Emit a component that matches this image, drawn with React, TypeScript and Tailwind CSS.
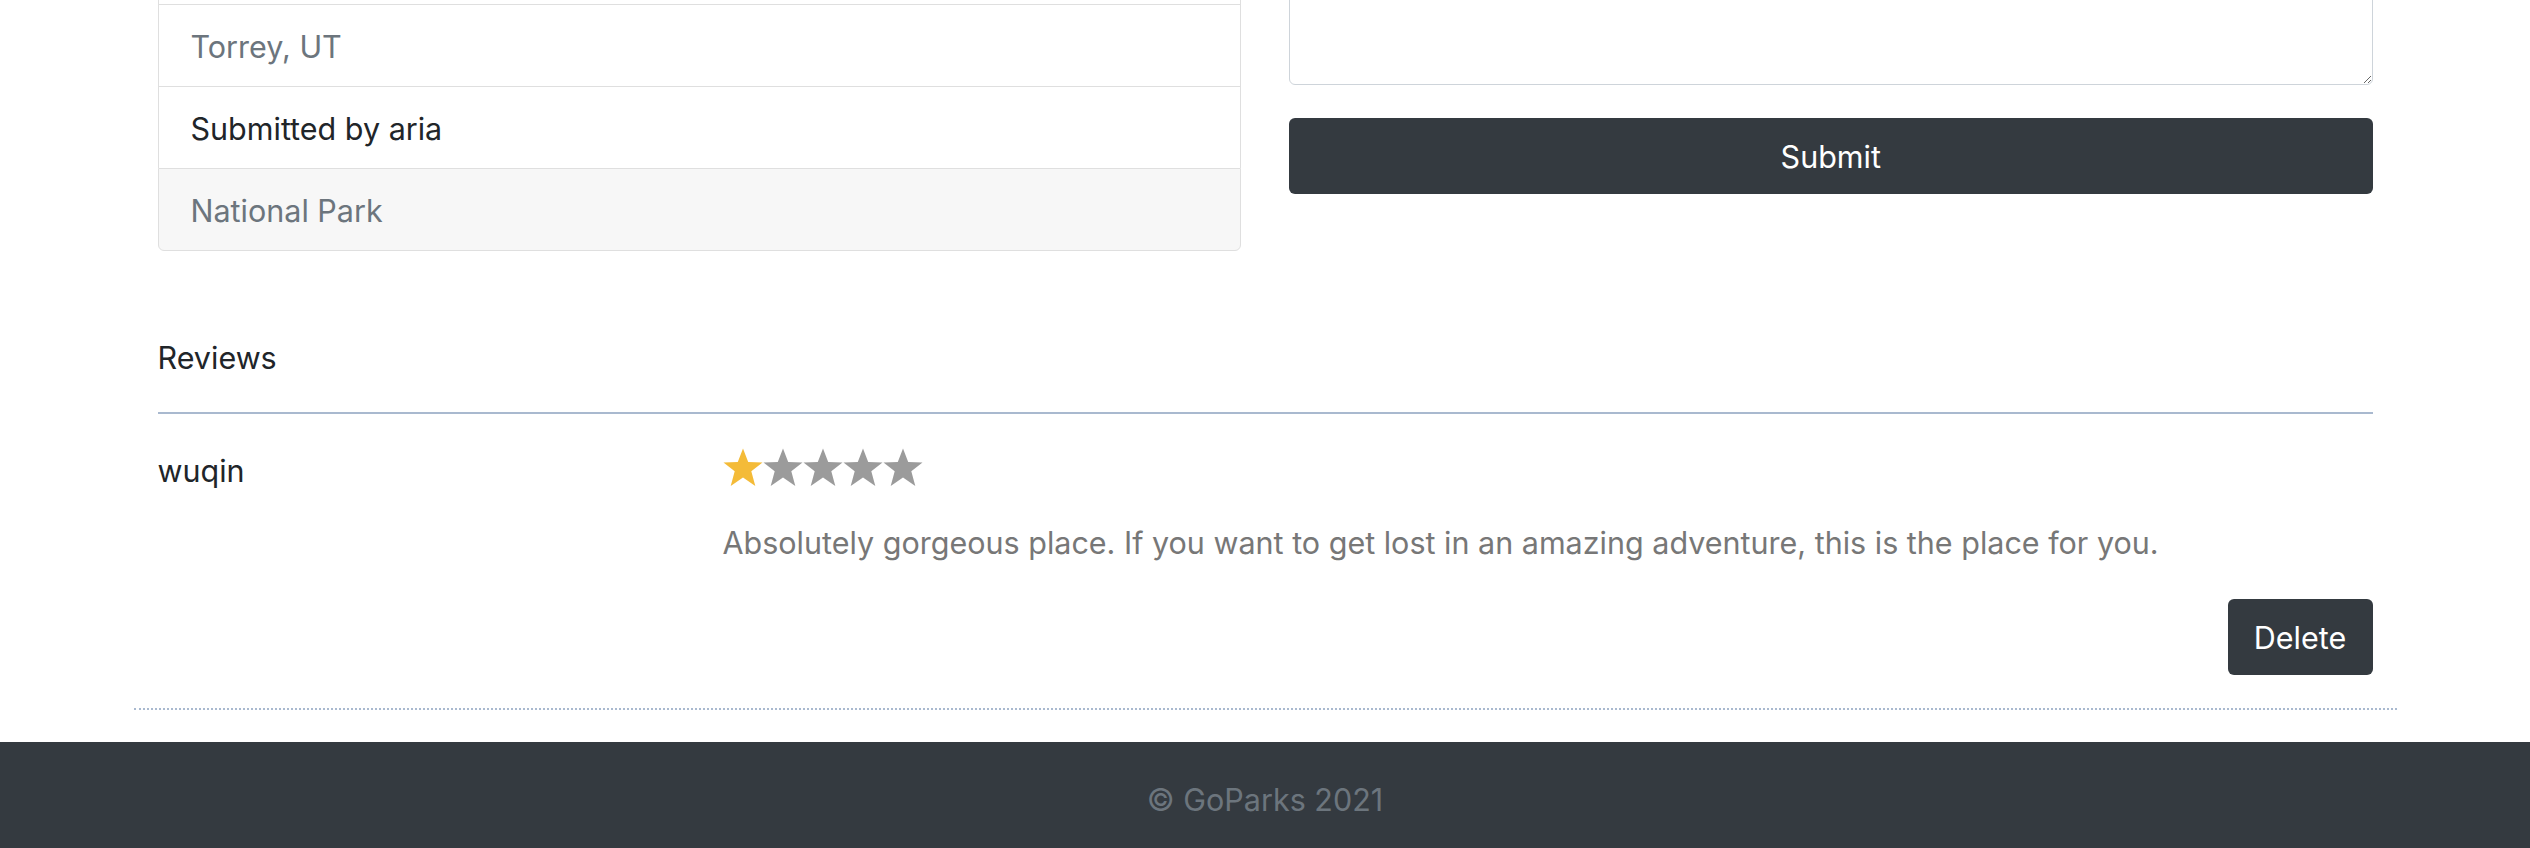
import React from "react";

function Star({ filled }: { filled: boolean }) {
  return (
    <svg width="40" height="39" viewBox="0 0 40 39" className="block">
      <polygon
        points="20,0.5 25.2,14 39.5,14.5 28.3,23.3 32.3,38 20,29.6 7.7,38 11.7,23.3 0.5,14.5 14.8,14"
        fill={filled ? "#f4bb38" : "#9b9b9b"}
      />
    </svg>
  );
}

export default function App() {
  return (
    <div className="w-full min-h-[848px] bg-white overflow-hidden font-['Inter',_'Liberation_Sans',_sans-serif] text-[30.5px] leading-[39px] text-[#212529]">
      <div className="mx-auto w-[2215px]">
        <div className="grid grid-cols-2 gap-x-[48px]">
          {/* Left card */}
          <div className="flex flex-col">
            <div className="h-[4px] border-x border-[#dfdfdf]" />
            <div className="h-[82px] border-x border-t border-[#dfdfdf] flex items-center pt-[2px] px-[32px] text-[#6c757d]">
              Torrey, UT
            </div>
            <div className="h-[82px] border-x border-t border-[#dfdfdf] flex items-center pt-[2px] px-[32px] text-[#212529]">
              Submitted by aria
            </div>
            <div className="h-[83px] border border-[#dfdfdf] rounded-b-[6px] bg-[#f7f7f7] flex items-center pt-[2px] px-[32px] text-[#6c757d]">
              National Park
            </div>
          </div>
          {/* Right column */}
          <div className="flex flex-col">
            <textarea
              className="-mt-[60px] h-[145px] w-full border border-[#ced4da] rounded-[6px] bg-white resize-y outline-none"
              defaultValue=""
            />
            <button className="mt-[33px] h-[76px] w-full bg-[#343a40] rounded-[6px] text-white text-[30.5px]">
              Submit
            </button>
          </div>
        </div>

        <div className="mt-[87px] h-[39px]">Reviews</div>
        <div className="mt-[35px] h-[2px] bg-[#a9b9cf]" />

        <div className="mt-[35px] flex">
          <div className="w-[565px] shrink-0 pt-[2px]">wuqin</div>
          <div className="flex-1 flex flex-col">
            <div className="flex h-[38px] -mt-[1px]">
              <Star filled />
              <Star filled={false} />
              <Star filled={false} />
              <Star filled={false} />
              <Star filled={false} />
            </div>
            <p className="mt-[37px] text-[#777777]">
              Absolutely gorgeous place. If you want to get lost in an amazing adventure, this is the place for you.
            </p>
            <div className="mt-[37px] flex justify-end">
              <button className="h-[76px] w-[145px] bg-[#343a40] rounded-[6px] text-white text-[30.5px]">
                Delete
              </button>
            </div>
          </div>
        </div>
        <div className="-mx-[24px] mt-[33px] border-t-2 border-dotted border-[#a9b9cf]" />
      </div>
      <footer className="mt-[32px] h-[114px] bg-[#343a40] flex items-center justify-center text-[#6c757d]">
        © GoParks 2021
      </footer>
    </div>
  );
}
